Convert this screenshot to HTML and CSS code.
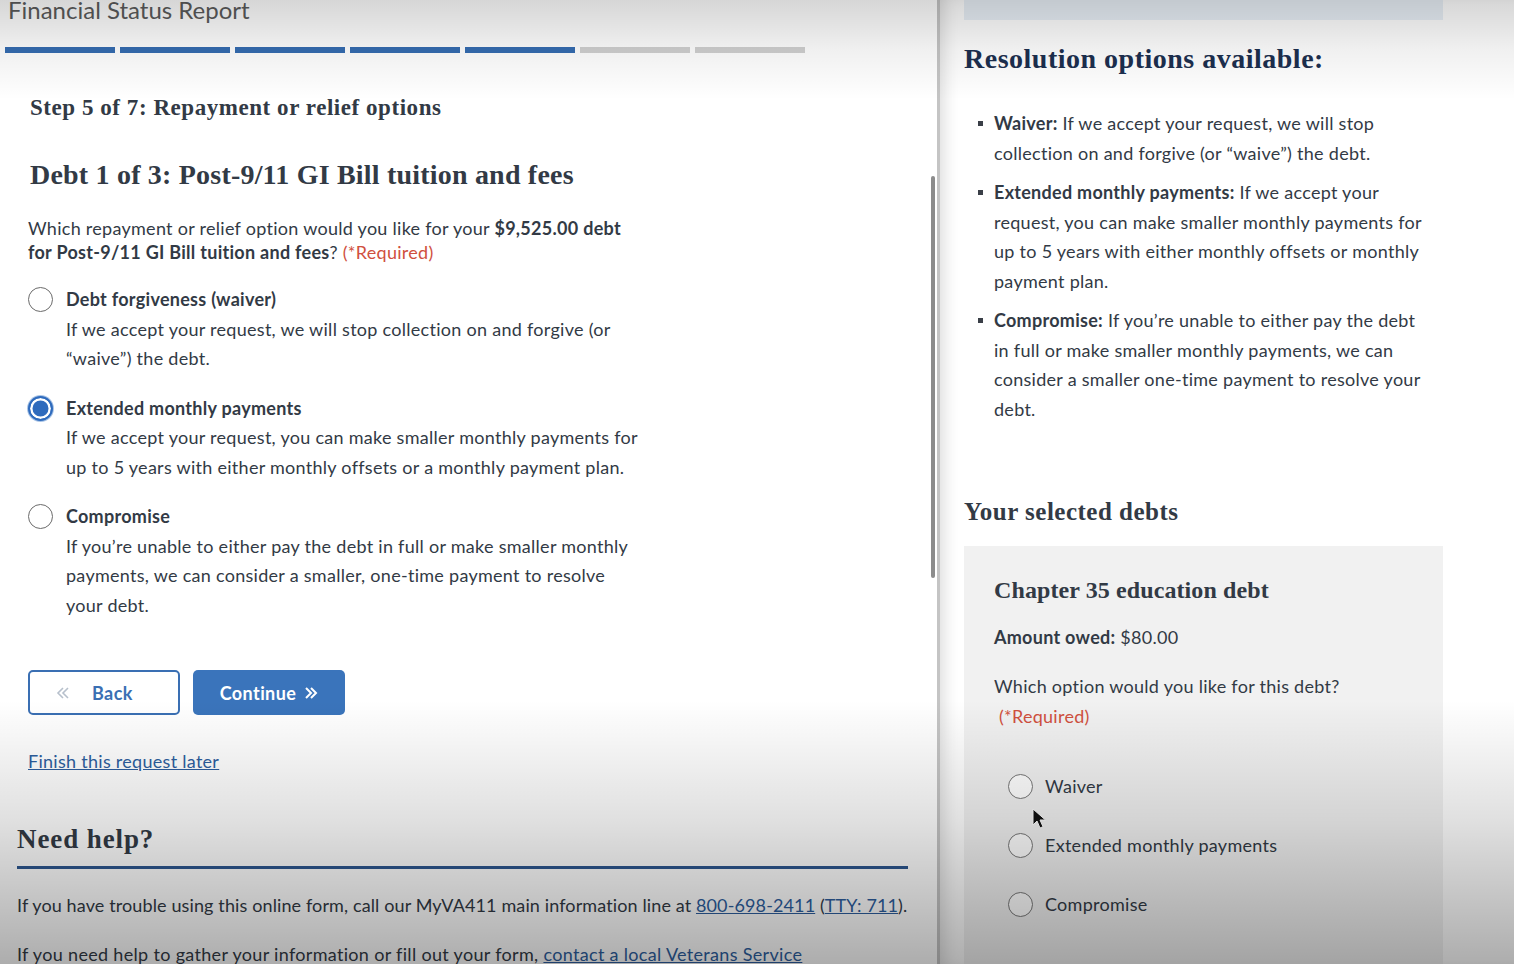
FILE: index.html
```html
<!DOCTYPE html>
<html lang="en">
<head>
<meta charset="utf-8">
<title>Financial Status Report</title>
<link rel="stylesheet" href="styles.css">
</head>
<body>
<div class="screen">
  <section class="left">
    <div class="left-inner">
      <div class="app-title">Financial Status Report</div>
      <div class="progress">
        <span class="seg done"></span><span class="seg done"></span><span class="seg done"></span><span class="seg done"></span><span class="seg done"></span><span class="seg"></span><span class="seg"></span>
      </div>
      <main class="form">
        <h2 class="step">Step 5 of 7: Repayment or relief options</h2>
        <h1 class="debt-title">Debt 1 of 3: Post-9/11 GI Bill tuition and fees</h1>
        <p class="question">Which repayment or relief option would you like for your <b>$9,525.00 debt for Post-9/11 GI Bill tuition and fees</b>? <span class="req">(*Required)</span></p>
        <div class="options">
          <div class="option">
            <span class="radio"></span>
            <div class="opt-text">
              <div class="opt-label">Debt forgiveness (waiver)</div>
              <div class="opt-desc">If we accept your request, we will stop collection on and forgive (or “waive”) the debt.</div>
            </div>
          </div>
          <div class="option">
            <span class="radio checked"></span>
            <div class="opt-text">
              <div class="opt-label">Extended monthly payments</div>
              <div class="opt-desc">If we accept your request, you can make smaller monthly payments for up to 5 years with either monthly offsets or a monthly payment plan.</div>
            </div>
          </div>
          <div class="option">
            <span class="radio"></span>
            <div class="opt-text">
              <div class="opt-label">Compromise</div>
              <div class="opt-desc">If you’re unable to either pay the debt in full or make smaller monthly payments, we can consider a smaller, one-time payment to resolve your debt.</div>
            </div>
          </div>
        </div>
        <div class="buttons">
          <button class="btn btn-back"><svg class="chev" width="14" height="12" viewBox="0 0 14 12"><path d="M7 1 2 6l5 5M12 1 7 6l5 5" fill="none" stroke="currentColor" stroke-width="1.6"/></svg><span>Back</span></button>
          <button class="btn btn-continue"><span>Continue</span><svg class="chev" width="14" height="12" viewBox="0 0 14 12"><path d="M2 1l5 5-5 5M7 1l5 5-5 5" fill="none" stroke="currentColor" stroke-width="2"/></svg></button>
        </div>
        <a class="later" href="#">Finish this request later</a>
      </main>
      <section class="help">
        <h2 class="help-title">Need help?</h2>
        <p class="help-p">If you have trouble using this online form, call our MyVA411 main information line at <a href="#">800-698-2411</a> (<a href="#">TTY: 711</a>).</p>
        <p class="help-p second">If you need help to gather your information or fill out your form, <a href="#">contact a local Veterans Service</a></p>
      </section>
    </div>
    <div class="scrollbar"><div class="thumb"></div></div>
  </section>
  <div class="divider"></div>
  <aside class="right">
    <div class="top-box"></div>
    <h2 class="res-title">Resolution options available:</h2>
    <ul class="res-list">
      <li><b>Waiver:</b> If we accept your request, we will stop collection on and forgive (or “waive”) the debt.</li>
      <li><b>Extended monthly payments:</b> If we accept your request, you can make smaller monthly payments for up to 5 years with either monthly offsets or monthly payment plan.</li>
      <li><b>Compromise:</b> If you’re unable to either pay the debt in full or make smaller monthly payments, we can consider a smaller one-time payment to resolve your debt.</li>
    </ul>
    <h2 class="sel-title">Your selected debts</h2>
    <div class="card">
      <h3 class="card-title">Chapter 35 education debt</h3>
      <p class="owed"><b>Amount owed:</b> $80.00</p>
      <p class="card-q">Which option would you like for this debt?<br><span class="req">&nbsp;(*Required)</span></p>
      <div class="card-radios">
        <div class="crow"><span class="radio small"></span><span>Waiver</span></div>
        <div class="crow"><span class="radio small"></span><span>Extended monthly payments</span></div>
        <div class="crow"><span class="radio small"></span><span>Compromise</span></div>
      </div>
    </div>
  </aside>
  <svg class="cursor" width="14" height="22" viewBox="0 0 14 22"><path d="M1 1v16l4-4 3 7 3-1.3-3-6.7h5.5z" fill="#111" stroke="#fff" stroke-width="1"/></svg>
  <div class="vignette"></div>
</div>
</body>
</html>
```
FILE: styles.css
```css
* { box-sizing: border-box; }
html, body { margin: 0; padding: 0; }
body {
  width: 1514px;
  height: 964px;
  overflow: hidden;
  background: #fff;
  font-family: "Lato", "Liberation Sans", sans-serif;
  color: #323a45;
  letter-spacing: 0.28px;
}
.screen {
  position: relative;
  display: flex;
  width: 1514px;
  height: 964px;
  overflow: hidden;
}
.left {
  width: 937px;
  display: flex;
  background: #fff;
}
.left-inner {
  width: 930px;
}
.scrollbar {
  width: 7px;
  padding-top: 176px;
}
.thumb {
  width: 4px;
  margin-left: 1px;
  height: 402px;
  background: #8c8c8c;
  border-radius: 2px;
}
.divider {
  width: 3px;
  background: #c4c4c4;
}
.app-title {
  font-size: 24px;
  line-height: 24px;
  margin-top: -2px;
  padding-left: 8px;
  color: #5b5b5b;
  letter-spacing: 0;
}
.progress {
  display: flex;
  gap: 5px;
  padding-left: 5px;
  margin-top: 25px;
}
.seg {
  width: 110px;
  height: 6px;
  background: #d0d0d0;
}
.seg.done { background: #356cb1; }

.form { padding-left: 28px; }
.step {
  margin: 43px 0 0 2px;
  font-family: "Liberation Serif", serif;
  font-weight: 700;
  font-size: 23px;
  line-height: 24px;
  letter-spacing: 0.55px;
  color: #323a45;
}
.debt-title {
  margin: 39px 0 0 2px;
  font-family: "Liberation Serif", serif;
  font-weight: 700;
  font-size: 28px;
  line-height: 32px;
  letter-spacing: 0.2px;
  color: #323a45;
}
.question {
  margin: 25px 0 0;
  width: 605px;
  font-size: 18px;
  line-height: 24px;
}
.req { color: #d0503e; }
.options {
  margin-top: 21px;
  display: flex;
  flex-direction: column;
  gap: 20px;
}
.option {
  display: flex;
  gap: 13px;
}
.radio {
  flex: none;
  width: 25px;
  height: 25px;
  border-radius: 50%;
  border: 1.5px solid #6b6b6b;
  background: #fff;
  margin-top: 2px;
}
.radio.checked {
  border: 2px solid #2f6bbd;
  background: #2f6bbd;
  box-shadow: inset 0 0 0 2.5px #fff, 0 0 0 1px #a9c4e6;
}
.opt-text {
  width: 576px;
  font-size: 18px;
  line-height: 29.5px;
}
.opt-label { font-weight: 700; }
.buttons {
  margin-top: 50px;
  display: flex;
  gap: 13px;
}
.btn {
  width: 152px;
  height: 45px;
  border-radius: 5px;
  font-family: "Lato", "Liberation Sans", sans-serif;
  font-size: 18px;
  font-weight: 700;
  letter-spacing: 0.4px;
  display: flex;
  align-items: center;
  cursor: pointer;
}
.btn-back {
  background: #fff;
  border: 2px solid #3a6fb3;
  color: #3a6fb3;
  padding-left: 26px;
  gap: 22px;
}
.btn-back .chev { color: #b7c0cc; }
.btn-continue {
  background: #3a74bb;
  border: none;
  color: #fff;
  justify-content: center;
  gap: 8px;
}
.later {
  display: inline-block;
  margin-top: 34px;
  font-size: 18px;
  line-height: 24px;
  color: #2d5e9e;
  text-decoration: underline;
}
.help {
  padding-left: 17px;
  width: 908px;
}
.help-title {
  margin: 51px 0 0;
  padding-bottom: 12px;
  font-family: "Liberation Serif", serif;
  font-weight: 700;
  font-size: 27px;
  line-height: 30px;
  letter-spacing: 0.9px;
  color: #323a45;
  border-bottom: 3px solid #2d5790;
}
.help-p {
  margin: 24px 0 0;
  font-size: 18px;
  line-height: 24px;
  letter-spacing: 0.12px;
  white-space: nowrap;
}
.help-p.second { margin-top: 25px; letter-spacing: 0.32px; }
.help-p a { color: #2d5e9e; }

.right {
  flex: 1;
  padding-left: 24px;
  background: #fff;
  box-shadow: inset 14px 0 16px -10px rgba(0,0,0,0.14);
}
.top-box {
  width: 479px;
  height: 20px;
  background: #e9f0f7;
}
.res-title {
  margin: 23px 0 0;
  font-family: "Liberation Serif", serif;
  font-weight: 700;
  font-size: 28px;
  line-height: 32px;
  letter-spacing: 0.5px;
  color: #1c2f4f;
}
.res-list {
  list-style: none;
  margin: 34px 0 0;
  padding: 0;
  width: 462px;
  display: flex;
  flex-direction: column;
  gap: 10px;
}
.res-list li {
  position: relative;
  padding-left: 30px;
  font-size: 18px;
  line-height: 29.5px;
}
.res-list li::before {
  content: "";
  position: absolute;
  left: 14px;
  top: 12px;
  width: 5px;
  height: 5px;
  background: #3a3f47;
}
.sel-title {
  margin: 73px 0 0;
  font-family: "Liberation Serif", serif;
  font-weight: 700;
  font-size: 25px;
  line-height: 30px;
  letter-spacing: 0.5px;
  color: #323a45;
}
.card {
  margin-top: 19px;
  width: 479px;
  height: 500px;
  background: #f1f1f1;
  padding: 30px 0 0 30px;
}
.card-title {
  margin: 0;
  font-family: "Liberation Serif", serif;
  font-weight: 700;
  font-size: 24px;
  line-height: 28px;
  letter-spacing: 0.1px;
  color: #323a45;
}
.owed {
  margin: 21px 0 0;
  font-size: 18px;
  line-height: 24px;
}
.card-q {
  margin: 23px 0 0;
  font-size: 18px;
  line-height: 29.5px;
}
.card-radios {
  margin-top: 40px;
  padding-left: 14px;
  display: flex;
  flex-direction: column;
  gap: 29px;
}
.crow {
  display: flex;
  align-items: center;
  gap: 12px;
  height: 30px;
  font-size: 18px;
}
.radio.small { margin-top: 0; border-color: #777; }
.cursor {
  position: absolute;
  left: 1032px;
  top: 808px;
}
.vignette {
  position: absolute;
  inset: 0;
  pointer-events: none;
  background: linear-gradient(to bottom, rgba(0,0,0,0.16) 0px, rgba(0,0,0,0.06) 50px, rgba(0,0,0,0) 100px, rgba(0,0,0,0) 700px, rgba(0,0,0,0.12) 820px, rgba(0,0,0,0.32) 964px);
}
```
